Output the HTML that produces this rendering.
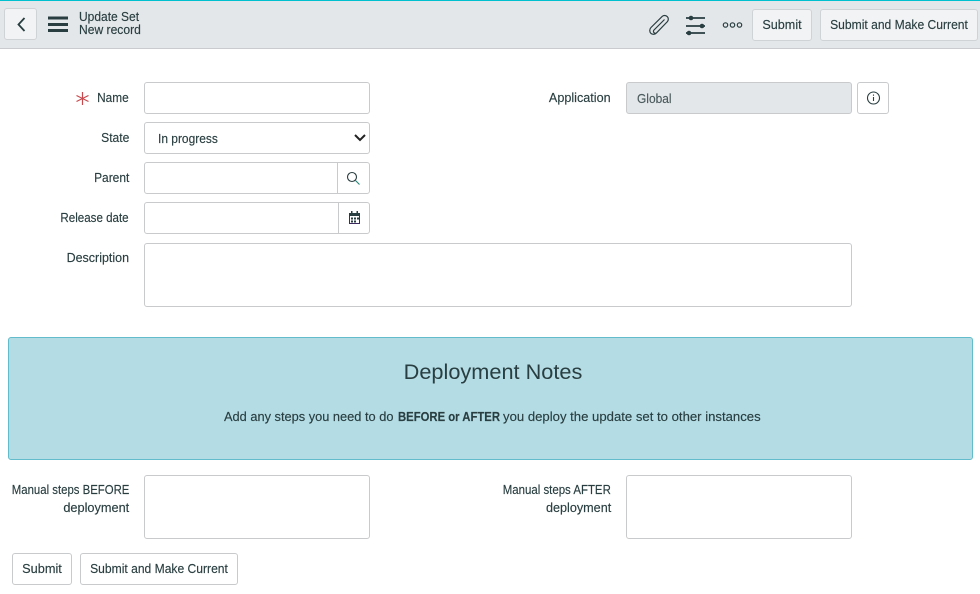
<!DOCTYPE html>
<html><head><meta charset="utf-8"><style>
*{box-sizing:border-box}
html,body{margin:0;padding:0;width:980px;height:594px;overflow:hidden;background:#fff}
body{font-family:"Liberation Sans",sans-serif;font-size:13px;color:#293e40;position:relative}
.a{position:absolute}
.t{position:absolute;white-space:nowrap;line-height:18px;-webkit-text-stroke:.15px #293e40}
.l{right:851px;transform-origin:right center}
.m{right:369px;transform-origin:right center}
.s{transform-origin:left center}
.c{transform-origin:center center;text-align:center}
.i{position:absolute;background:#fff;border:1px solid #c8cacc;border-radius:3px}
.b{position:absolute;background:#fff;border:1px solid #c8cacc;border-radius:3px}
.h{background:#f1f3f5;border-color:#d0d3d6}
</style></head><body>
<div class="a" style="left:0;top:0;width:980px;height:49px;background:#e4e7ea;border-top:1px solid #00c0d0;border-bottom:1px solid #c9cbce"></div>
<div class="b h" style="left:4px;top:8px;width:33px;height:32px"></div>
<svg class="a" style="left:0;top:0" width="980" height="49" fill="none" stroke="#293e40">
<path d="M24.500 18l-6 6.500 6 6.500" stroke-width="1.800"/>
<path d="M48 18h20M48 24.500h20M48 30.500h20" stroke-width="3"/>
<path stroke-width="1.200" d="M664.500 19.500L654 30a1.900 1.900 0 0 0 2.700 2.700L667.500 21.500a3.700 3.700 0 0 0-5.200-5.200L651 27.500a4.200 4.200 0 0 0 0 6a4.200 4.200 0 0 0 5.500-.5"/>
<path d="M686 18h19M686 26h19M686 33h19" stroke-width="1.800"/>
<circle cx="691" cy="18" r="2.300" fill="#293e40" stroke="none"/><circle cx="702" cy="26" r="2.300" fill="#293e40" stroke="none"/><circle cx="689" cy="33" r="2.300" fill="#293e40" stroke="none"/>
<g stroke-width="1.200"><circle cx="725.500" cy="25" r="2.200"/><circle cx="732.500" cy="25" r="2.200"/><circle cx="739.500" cy="25" r="2.200"/></g>
</svg>
<div class="t s" style="left:79px;top:8px;font-size:12.500px;transform:scaleX(.96)">Update Set</div>
<div class="t s" style="left:79px;top:21px;font-size:13px;transform:scaleX(.93)">New record</div>
<div class="b h" style="left:752px;top:9px;width:60px;height:32px"></div>
<div class="t c" style="left:752px;width:60px;top:16px;transform:scaleX(.97)">Submit</div>
<div class="b h" style="left:820px;top:9px;width:158px;height:32px"></div>
<div class="t c" style="left:820px;width:158px;top:16px;transform:scaleX(.93)">Submit and Make Current</div>

<svg class="a" style="left:75px;top:91px" width="16" height="16" stroke="#c84a4f" stroke-width="1.200" fill="none"><path d="M7.500 1v13M1.500 4.500l12 6M13.500 4.500l-12 6"/></svg>
<div class="t l" style="top:89px;transform:scaleX(.91)">Name</div>
<div class="i" style="left:144px;top:82px;width:226px;height:32px"></div>
<div class="t l" style="top:129px;transform:scaleX(.93)">State</div>
<div class="i" style="left:144px;top:122px;width:226px;height:32px"></div>
<div class="t s" style="left:158px;top:130px;transform:scaleX(.92)">In progress</div>
<svg class="a" style="left:354px;top:134px" width="12" height="8" fill="none" stroke="#222" stroke-width="2"><path d="M1 1l5 5 5-5"/></svg>
<div class="t l" style="top:169px;transform:scaleX(.92)">Parent</div>
<div class="i" style="left:144px;top:162px;width:226px;height:32px"></div>
<div class="a" style="left:337px;top:163px;width:1px;height:30px;background:#c8cacc"></div>
<svg class="a" style="left:346px;top:171px" width="15" height="15" fill="none" stroke="#293e40" stroke-width="1.100"><circle cx="6" cy="6" r="4.500"/><path d="M9.500 9.500l4 4" stroke="#1f8476"/></svg>
<div class="t l" style="top:209px;transform:scaleX(.89)">Release date</div>
<div class="i" style="left:144px;top:202px;width:226px;height:32px"></div>
<div class="a" style="left:338px;top:203px;width:1px;height:30px;background:#c8cacc"></div>
<svg class="a" style="left:347px;top:211px" width="15" height="14"><path d="M2.500 2.500h10v10h-10z" fill="#fff" stroke="#3a2a5e"/><path d="M2 2h11v3H2z" fill="#293e40"/><path d="M4 0h1.500v3H4zM9.500 0H11v3H9.500z" fill="#293e40"/><path d="M4 6.500h2v2H4zM7 6.500h2v2H7zM10 6.500h2v2h-2zM4 9.500h2v2H4zM7 9.500h2v2H7z" fill="#293e40"/></svg>
<div class="t l" style="top:249px;transform:scaleX(.96)">Description</div>
<div class="i" style="left:144px;top:243px;width:708px;height:64px"></div>

<div class="t m" style="top:89px;transform:scaleX(.97)">Application</div>
<div class="i" style="left:626px;top:82px;width:226px;height:32px;background:#e4e7ea"></div>
<div class="t s" style="left:637px;top:90px;transform:scaleX(.92);color:#4a5a5c;-webkit-text-stroke:.15px #4a5a5c">Global</div>
<div class="i" style="left:857px;top:82px;width:32px;height:32px"></div>
<svg class="a" style="left:866px;top:90px" width="15" height="15" fill="none" stroke="#293e40" stroke-width="1.100"><circle cx="7.500" cy="8" r="6"/><path d="M7.500 7v4M7.500 4.500v1.300"/></svg>

<div class="a" style="left:8px;top:337px;width:965px;height:123px;background:#b4dce4;border:1px solid #62bccb;border-radius:3px"></div>
<div class="t c" style="left:8px;width:970px;top:358px;line-height:28px;font-size:21.500px;transform:scaleX(1.01);-webkit-text-stroke:0">Deployment Notes</div>
<div class="t s" style="left:224px;top:408px;transform:scaleX(.985)">Add any steps you need to do</div>
<div class="t s" style="left:398px;top:408px;transform:scaleX(.87);font-weight:700">BEFORE or AFTER</div>
<div class="t s" style="left:503px;top:408px;transform:scaleX(1.01)">you deploy the update set to other instances</div>

<div class="t l" style="top:481px;transform:scaleX(.875)">Manual steps BEFORE</div>
<div class="t l" style="top:499px;transform:scaleX(.98)">deployment</div>
<div class="i" style="left:144px;top:475px;width:226px;height:64px"></div>
<div class="t m" style="top:481px;transform:scaleX(.88)">Manual steps AFTER</div>
<div class="t m" style="top:499px;transform:scaleX(.97)">deployment</div>
<div class="i" style="left:626px;top:475px;width:226px;height:64px"></div>
<div class="b" style="left:12px;top:553px;width:60px;height:32px"></div>
<div class="t c" style="left:12px;width:60px;top:560px;transform:scaleX(.98)">Submit</div>
<div class="b" style="left:80px;top:553px;width:158px;height:32px"></div>
<div class="t c" style="left:80px;width:158px;top:560px;transform:scaleX(.93)">Submit and Make Current</div>
</body></html>
